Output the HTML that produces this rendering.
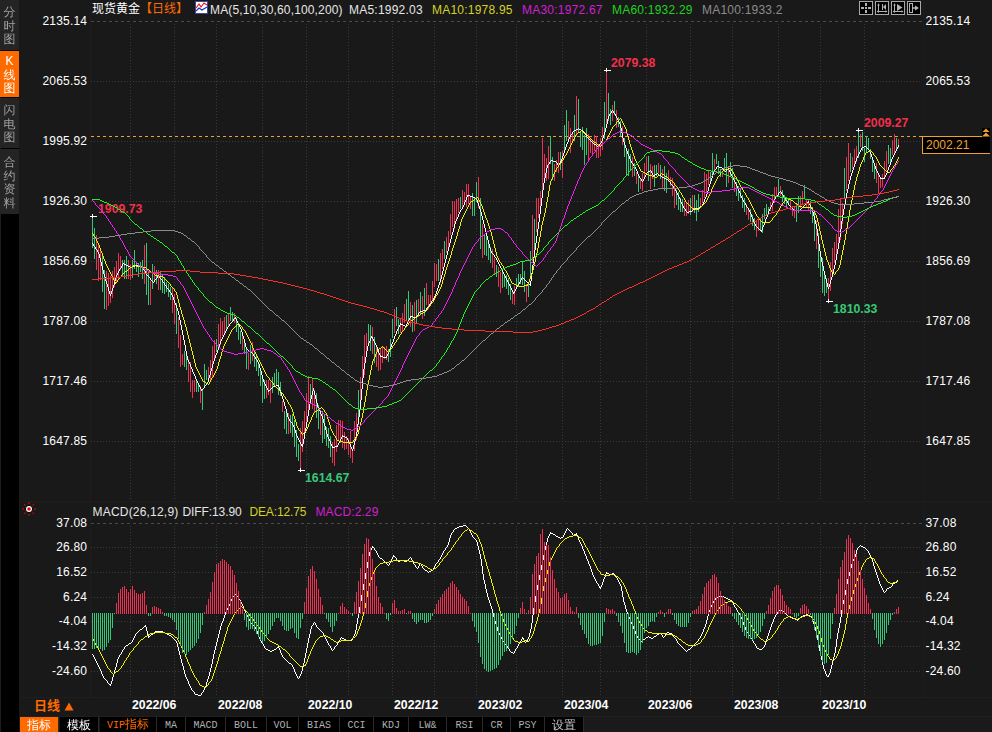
<!DOCTYPE html><html><head><meta charset="utf-8"><title>现货黄金 日线</title><style>
html,body{margin:0;padding:0;background:#191919;}
body{width:992px;height:732px;position:relative;overflow:hidden;font-family:"Liberation Sans","Noto Sans CJK SC",sans-serif;font-size:12px;color:#fff;}
.t{position:absolute;white-space:nowrap;line-height:14px;}
.yl{position:absolute;left:20px;width:67.2px;text-align:right;letter-spacing:0.2px;line-height:14px;height:14px;}
.yr{position:absolute;left:925.5px;letter-spacing:0.2px;line-height:14px;height:14px;}
.side{position:absolute;left:0;top:0;width:18px;height:732px;background:#000;border-left:1px solid #1c1c1c;box-sizing:content-box}
.tab{position:absolute;left:0;width:19px;background:#242424;color:#a0a0a0;font-family:"Liberation Sans","WenQuanYi Zen Hei","Noto Sans CJK SC",sans-serif;font-size:12px;text-align:center;}
.tab span{display:block;height:13.6px;line-height:13.6px;}
.tab.on{background:#ff6a00;color:#fff;}
.xl{position:absolute;top:698px;font-weight:bold;font-size:12.3px;line-height:14px;color:#fff;white-space:nowrap}
.bar{position:absolute;left:20px;top:716px;height:16px;width:972px;background:#1a1a1a;border-top:1px solid #1f1f1f;box-sizing:border-box}
.bt{position:absolute;top:717px;height:15px;line-height:18px;overflow:hidden;text-align:center;font-family:"Liberation Mono","Noto Sans CJK SC",monospace;font-size:10px;color:#b0b0b0;background:#000;box-sizing:border-box;border-right:1px solid #2a2a2a;}
.ib{position:absolute;top:1px;width:14px;height:14px;box-sizing:border-box;border:1px solid #a0a0a0;background:#000;}
</style></head><body>
<svg width="992" height="732" viewBox="0 0 992 732" shape-rendering="crispEdges" style="position:absolute;left:0;top:0"><line x1="91" y1="21.5" x2="922" y2="21.5" stroke="#4a4a4a" stroke-dasharray="3 3"/>
<line x1="91" y1="81.5" x2="922" y2="81.5" stroke="#3a3a3a" stroke-dasharray="1 2"/>
<line x1="91" y1="141.5" x2="922" y2="141.5" stroke="#3a3a3a" stroke-dasharray="1 2"/>
<line x1="91" y1="201.5" x2="922" y2="201.5" stroke="#3a3a3a" stroke-dasharray="1 2"/>
<line x1="91" y1="261.5" x2="922" y2="261.5" stroke="#3a3a3a" stroke-dasharray="1 2"/>
<line x1="91" y1="321.5" x2="922" y2="321.5" stroke="#3a3a3a" stroke-dasharray="1 2"/>
<line x1="91" y1="381.5" x2="922" y2="381.5" stroke="#3a3a3a" stroke-dasharray="1 2"/>
<line x1="91" y1="441.5" x2="922" y2="441.5" stroke="#3a3a3a" stroke-dasharray="1 2"/>
<line x1="130.5" y1="24" x2="130.5" y2="500" stroke="#3a3a3a" stroke-dasharray="1 2"/>
<line x1="130.5" y1="526" x2="130.5" y2="697" stroke="#3a3a3a" stroke-dasharray="1 2"/>
<line x1="174.5" y1="24" x2="174.5" y2="500" stroke="#3a3a3a" stroke-dasharray="1 2"/>
<line x1="174.5" y1="526" x2="174.5" y2="697" stroke="#3a3a3a" stroke-dasharray="1 2"/>
<line x1="216.5" y1="24" x2="216.5" y2="500" stroke="#3a3a3a" stroke-dasharray="1 2"/>
<line x1="216.5" y1="526" x2="216.5" y2="697" stroke="#3a3a3a" stroke-dasharray="1 2"/>
<line x1="262.5" y1="24" x2="262.5" y2="500" stroke="#3a3a3a" stroke-dasharray="1 2"/>
<line x1="262.5" y1="526" x2="262.5" y2="697" stroke="#3a3a3a" stroke-dasharray="1 2"/>
<line x1="306.5" y1="24" x2="306.5" y2="500" stroke="#3a3a3a" stroke-dasharray="1 2"/>
<line x1="306.5" y1="526" x2="306.5" y2="697" stroke="#3a3a3a" stroke-dasharray="1 2"/>
<line x1="348.5" y1="24" x2="348.5" y2="500" stroke="#3a3a3a" stroke-dasharray="1 2"/>
<line x1="348.5" y1="526" x2="348.5" y2="697" stroke="#3a3a3a" stroke-dasharray="1 2"/>
<line x1="392.5" y1="24" x2="392.5" y2="500" stroke="#3a3a3a" stroke-dasharray="1 2"/>
<line x1="392.5" y1="526" x2="392.5" y2="697" stroke="#3a3a3a" stroke-dasharray="1 2"/>
<line x1="434.5" y1="24" x2="434.5" y2="500" stroke="#3a3a3a" stroke-dasharray="1 2"/>
<line x1="434.5" y1="526" x2="434.5" y2="697" stroke="#3a3a3a" stroke-dasharray="1 2"/>
<line x1="476.5" y1="24" x2="476.5" y2="500" stroke="#3a3a3a" stroke-dasharray="1 2"/>
<line x1="476.5" y1="526" x2="476.5" y2="697" stroke="#3a3a3a" stroke-dasharray="1 2"/>
<line x1="516.5" y1="24" x2="516.5" y2="500" stroke="#3a3a3a" stroke-dasharray="1 2"/>
<line x1="516.5" y1="526" x2="516.5" y2="697" stroke="#3a3a3a" stroke-dasharray="1 2"/>
<line x1="562.5" y1="24" x2="562.5" y2="500" stroke="#3a3a3a" stroke-dasharray="1 2"/>
<line x1="562.5" y1="526" x2="562.5" y2="697" stroke="#3a3a3a" stroke-dasharray="1 2"/>
<line x1="600.5" y1="24" x2="600.5" y2="500" stroke="#3a3a3a" stroke-dasharray="1 2"/>
<line x1="600.5" y1="526" x2="600.5" y2="697" stroke="#3a3a3a" stroke-dasharray="1 2"/>
<line x1="646.5" y1="24" x2="646.5" y2="500" stroke="#3a3a3a" stroke-dasharray="1 2"/>
<line x1="646.5" y1="526" x2="646.5" y2="697" stroke="#3a3a3a" stroke-dasharray="1 2"/>
<line x1="690.5" y1="24" x2="690.5" y2="500" stroke="#3a3a3a" stroke-dasharray="1 2"/>
<line x1="690.5" y1="526" x2="690.5" y2="697" stroke="#3a3a3a" stroke-dasharray="1 2"/>
<line x1="732.5" y1="24" x2="732.5" y2="500" stroke="#3a3a3a" stroke-dasharray="1 2"/>
<line x1="732.5" y1="526" x2="732.5" y2="697" stroke="#3a3a3a" stroke-dasharray="1 2"/>
<line x1="778.5" y1="24" x2="778.5" y2="500" stroke="#3a3a3a" stroke-dasharray="1 2"/>
<line x1="778.5" y1="526" x2="778.5" y2="697" stroke="#3a3a3a" stroke-dasharray="1 2"/>
<line x1="820.5" y1="24" x2="820.5" y2="500" stroke="#3a3a3a" stroke-dasharray="1 2"/>
<line x1="820.5" y1="526" x2="820.5" y2="697" stroke="#3a3a3a" stroke-dasharray="1 2"/>
<line x1="864.5" y1="24" x2="864.5" y2="500" stroke="#3a3a3a" stroke-dasharray="1 2"/>
<line x1="864.5" y1="526" x2="864.5" y2="697" stroke="#3a3a3a" stroke-dasharray="1 2"/>
<line x1="91" y1="523.5" x2="922" y2="523.5" stroke="#4a4a4a" stroke-dasharray="3 3"/>
<line x1="91" y1="547.5" x2="922" y2="547.5" stroke="#3a3a3a" stroke-dasharray="1 2"/>
<line x1="91" y1="572.5" x2="922" y2="572.5" stroke="#3a3a3a" stroke-dasharray="1 2"/>
<line x1="91" y1="597.5" x2="922" y2="597.5" stroke="#3a3a3a" stroke-dasharray="1 2"/>
<line x1="91" y1="621.5" x2="922" y2="621.5" stroke="#3a3a3a" stroke-dasharray="1 2"/>
<line x1="91" y1="646.5" x2="922" y2="646.5" stroke="#3a3a3a" stroke-dasharray="1 2"/>
<line x1="91" y1="671.5" x2="922" y2="671.5" stroke="#3a3a3a" stroke-dasharray="1 2"/>
<rect x="20" y="501" width="972" height="1" fill="#1e1e1e"/>
<rect x="20" y="697" width="972" height="1" fill="#1e1e1e"/>
<rect x="90" y="0" width="1" height="698" fill="#1d1d1d"/>
<rect x="923" y="0" width="1" height="698" fill="#1c1c1c"/>
<line x1="91" y1="136.5" x2="922" y2="136.5" stroke="#f0a030" stroke-dasharray="3 3"/>
<text x="98" y="213.26" fill="#f0304c" font-family="Liberation Sans, sans-serif" font-weight="bold" font-size="12.3" text-rendering="auto">1909.73</text>
<text x="611" y="67.26" fill="#f0304c" font-family="Liberation Sans, sans-serif" font-weight="bold" font-size="12.3" text-rendering="auto">2079.38</text>
<text x="864" y="127.26" fill="#f0304c" font-family="Liberation Sans, sans-serif" font-weight="bold" font-size="12.3" text-rendering="auto">2009.27</text>
<text x="305" y="482.26" fill="#38c878" font-family="Liberation Sans, sans-serif" font-weight="bold" font-size="12.3" text-rendering="auto">1614.67</text>
<text x="833" y="313.26" fill="#38c878" font-family="Liberation Sans, sans-serif" font-weight="bold" font-size="12.3" text-rendering="auto">1810.33</text>
<path d="M92 216v32M94 228v31M102 256v36M104 270v39M122 260v16M124 260v19M126 256v23M132 260v18M134 250v19M136 263v9M138 263v14M140 262v10M142 260v19M146 243v52M148 271v34M152 264v25M156 270v14M160 271v19M162 275v18M164 277v17M166 282v10M168 284v13M170 287v13M176 303v31M184 351v16M186 356v14M196 379v13M198 385v7M202 389v21M204 364v24M206 370v10M216 339v13M226 315v14M230 307v14M232 312v9M236 318v14M238 325v15M240 331v13M244 342v12M246 348v21M250 345v19M254 352v15M256 354v17M258 363v13M260 370v16M262 377v26M264 380v19M272 377v16M274 373v13M276 369v16M278 372v23M280 382v14M284 411v18M286 413v21M290 415v18M292 414v23M294 420v27M296 430v27M298 444v17M310 384v20M316 393v25M318 405v24M322 411v32M324 415v24M326 427v19M328 428v20M330 436v21M358 390v35M368 324v20M370 325v26M374 337v26M388 349v13M390 339v18M392 319v19M396 307v19M398 319v15M406 299v22M408 291v29M412 305v27M416 300v24M420 292v23M424 288v28M438 259v22M444 241v18M460 197v12M472 193v23M474 197v19M476 182v20M480 198v51M484 235v20M486 232v24M488 243v17M490 247v16M496 265v12M502 271v17M504 274v13M506 275v14M508 278v17M510 284v16M516 278v10M518 274v13M520 274v10M522 262v23M524 271v21M528 282v15M530 251v28M534 219v31M550 136v28M552 157v23M560 152v18M564 125v25M566 110v31M574 115v26M578 99v34M580 132v15M582 127v23M584 135v30M586 128v27M604 102v37M608 93v28M610 109v16M614 101v14M618 117v10M620 121v15M624 138v19M626 150v25M628 149v27M630 154v16M634 163v13M638 174v18M648 156v25M654 165v22M656 165v11M660 165v14M664 166v25M666 173v20M676 190v15M678 192v18M680 198v14M682 199v13M690 198v17M694 195v18M696 200v21M698 194v18M710 172v9M712 153v23M716 154v10M718 161v13M720 169v8M724 158v14M726 153v34M730 162v15M732 168v20M736 182v14M738 186v15M740 188v10M742 195v13M744 198v14M750 209v13M752 215v11M754 218v12M760 218v12M762 214v19M764 208v11M766 204v11M768 207v8M778 179v17M782 190v12M784 195v9M786 197v11M788 198v7M796 203v19M798 196v17M804 185v14M810 201v13M812 207v16M814 213v28M818 233v35M820 254v23M822 258v35M824 271v25M826 278v15M844 168v30M850 153v19M858 131v27M862 132v19M864 148v14M866 136v17M868 138v11M870 149v10M872 158v14M874 163v16M888 145v19M890 148v16M896 138v11" stroke="#32c878" transform="translate(.5 0)"/>
<path d="M96 235v35M98 243v38M100 250v30M106 271v39M108 273v33M110 276v27M112 271v27M114 267v20M116 261v21M118 253v26M120 256v14M128 260v19M130 265v15M144 245v39M150 281v24M154 266v16M158 270v20M172 288v25M174 294v30M178 317v31M180 335v32M182 354v11M188 359v23M190 362v30M192 380v18M194 380v12M200 386v17M208 367v14M210 360v22M212 346v32M214 340v18M218 324v26M220 318v27M222 321v15M224 317v17M228 313v14M234 313v10M242 332v18M248 353v17M252 342v19M266 380v18M268 380v15M270 382v21M282 401v11M288 413v21M300 428v42M302 421v31M304 411v27M306 393v34M308 376v37M312 379v30M314 390v23M320 412v23M332 442v21M334 439v27M336 425v27M338 420v21M340 420v23M342 421v27M344 432v18M346 436v13M348 439v16M350 431v27M352 450v13M354 421v30M356 413v27M360 377v32M362 356v29M364 335v40M366 333v23M372 327v27M376 345v22M378 349v22M380 349v21M382 347v16M384 347v12M386 346v14M394 309v24M400 319v14M402 313v19M404 304v19M410 302v25M414 302v29M418 299v18M422 296v23M426 283v22M428 295v14M430 295v10M432 281v19M434 263v24M436 264v17M440 253v30M442 249v20M446 237v16M448 231v16M450 214v21M452 201v26M454 201v28M456 199v22M458 198v15M462 190v18M464 192v12M466 184v23M468 184v20M470 196v13M478 177v31M482 224v34M492 249v19M494 258v16M498 267v20M500 272v21M512 292v12M514 286v19M526 284v18M532 215v46M536 198v34M538 198v20M540 191v20M542 138v54M544 154v28M546 158v23M548 146v33M554 164v17M556 160v12M558 152v21M562 151v27M568 121v21M570 128v25M572 134v8M576 96v40M588 134v28M590 138v15M592 140v14M594 135v16M596 136v22M598 144v14M600 138v18M602 127v23M606 71v57M612 105v16M616 110v18M622 126v19M632 157v20M636 172v12M640 179v10M642 173v18M644 163v14M646 157v14M650 164v25M652 166v13M658 163v10M662 169v19M668 170v12M670 177v9M672 178v18M674 185v23M684 201v15M686 202v14M688 200v14M692 195v17M700 198v10M702 190v13M704 172v26M706 174v18M708 170v15M714 159v13M722 171v6M728 167v16M734 176v16M746 204v11M748 209v11M756 221v16M758 217v14M770 202v9M772 194v17M774 187v16M776 187v10M780 186v10M790 200v10M792 206v10M794 206v12M800 196v12M802 191v13M806 199v9M808 200v10M816 221v28M828 278v23M830 262v29M832 248v25M834 242v21M836 234v25M838 209v36M840 198v42M842 203v21M846 157v34M848 143v38M852 157v12M854 149v15M856 146v16M860 134v13M876 163v20M878 175v19M880 178v10M882 174v13M884 161v17M886 151v19M892 140v15M894 134v21M898 139v9" stroke="#ee3152" transform="translate(.5 0)"/>
<path d="M124 264h2M126 265h2M128 266h2M130 267h2M132 266h3M135 265h3M138 266h3M141 267h2M201 389h2M234 318h2M249 351h2M268 390h2M273 386h3M276 385h3M301 444h2M301 445h2M332 447h3M335 446h3M342 436h3M345 437h2M371 337h2M380 356h3M383 357h4M400 324h3M403 325h2M410 316h3M413 317h3M420 311h3M423 310h3M467 195h3M470 196h3M473 197h2M475 198h2M513 292h2M529 284h2M551 160h2M553 161h3M574 130h2M576 129h2M579 129h2M581 130h2M594 144h2M648 171h2M653 175h2M655 174h2M659 175h2M662 177h2M664 178h2M666 179h2M687 212h2M689 211h3M693 209h2M695 208h4M700 206h2M717 166h2M719 167h3M727 169h2M760 230h2M794 210h6M807 202h2M862 147h2M864 146h2M880 178h5" stroke="#ffffff" transform="translate(0 .5)"/><path d="M92 243v1M93 244v2M94 246v1M95 247v2M96 249v1M97 250v2M98 252v2M99 254v4M100 258v4M101 262v4M102 266v4M103 270v4M104 274v3M105 277v4M106 281v3M107 284v3M108 287v4M109 291v3M110 294v2M111 291v3M112 288v3M113 285v3M114 281v4M115 278v3M116 275v3M117 273v2M118 271v2M119 269v2M120 268v1M121 266v2M122 264v2M123 263v1M143 268v2M144 270v1M145 271v2M146 273v2M147 275v1M148 276v1M149 277v1M150 278v2M151 280v1M152 281v1M153 282v1M154 280v2M155 279v1M156 278v1M157 276v2M158 275v1M159 276v2M160 278v1M161 279v1M162 280v2M163 282v1M164 283v2M165 285v1M166 286v2M167 288v1M168 289v1M169 290v2M170 292v1M171 293v2M172 295v2M173 297v3M174 300v3M175 303v2M176 305v3M177 308v3M178 311v4M179 315v5M180 320v5M181 325v5M182 330v5M183 335v5M184 340v5M185 345v6M186 351v5M187 356v4M188 360v2M189 362v2M190 364v3M191 367v2M192 369v3M193 372v2M194 374v2M195 376v3M196 379v2M197 381v2M198 383v2M199 385v2M200 387v2M201 390v1M203 388v1M204 386v2M205 385v1M206 384v1M207 382v2M208 378v4M209 375v3M210 371v4M211 368v3M212 364v4M213 361v3M214 358v3M215 355v3M216 353v2M217 350v3M218 347v3M219 344v3M220 341v3M221 339v2M222 337v2M223 335v2M224 333v2M225 331v2M226 329v2M227 327v2M228 326v1M229 324v2M230 323v1M231 322v1M232 321v1M233 319v2M235 317v1M236 319v2M237 321v2M238 323v2M239 325v2M240 327v2M241 329v3M242 332v4M243 336v3M244 339v4M245 343v4M246 347v2M247 349v1M248 350v1M251 352v1M252 353v1M253 354v2M254 356v1M255 357v2M256 359v1M257 360v2M258 362v2M259 364v4M260 368v3M261 371v4M262 375v4M263 379v3M264 382v2M265 384v2M266 386v2M267 388v2M268 391v1M270 389v1M271 388v1M272 387v1M278 386v1M279 387v3M280 390v3M281 393v3M282 396v3M283 399v3M284 402v4M285 406v3M286 409v4M287 413v4M288 417v2M289 419v2M290 421v1M291 422v1M292 423v2M293 425v2M294 427v3M295 430v3M296 433v3M297 436v2M298 438v2M299 440v2M300 442v2M302 446v1M303 439v5M304 433v6M305 428v5M306 422v6M307 416v6M308 410v6M309 404v6M310 399v5M311 395v4M312 391v4M313 388v3M314 391v4M315 395v4M316 399v4M317 403v4M318 407v2M319 409v2M320 411v3M321 414v2M322 416v3M323 419v4M324 423v3M325 426v4M326 430v4M327 434v3M328 437v2M329 439v2M330 441v3M331 444v2M332 446v1M337 445v1M338 443v2M339 441v2M340 439v2M341 437v2M342 435v1M347 438v2M348 440v2M349 442v2M350 444v3M351 447v2M352 449v2M353 445v4M354 441v4M355 437v4M356 432v5M357 424v8M358 417v7M359 409v8M360 400v9M361 389v11M362 378v11M363 369v9M364 363v6M365 357v6M366 351v6M367 346v5M368 343v3M369 341v2M370 338v3M371 336v1M372 338v1M373 339v2M374 341v2M375 343v2M376 345v2M377 347v3M378 350v3M379 353v2M380 355v1M386 356v1M387 354v2M388 352v2M389 349v3M390 347v2M391 344v3M392 342v2M393 339v3M394 336v3M395 334v2M396 331v3M397 329v2M398 327v2M399 325v2M400 323v1M405 326v1M406 324v2M407 322v2M408 320v2M409 318v2M410 317v1M416 316v1M417 315v1M418 313v2M419 312v1M426 308v2M427 307v1M428 306v1M429 304v2M430 303v1M431 301v2M432 300v1M433 298v2M434 296v2M435 294v2M436 291v3M437 288v3M438 285v3M439 282v3M440 279v3M441 275v4M442 271v4M443 267v4M444 263v4M445 259v4M446 255v4M447 251v4M448 247v4M449 243v4M450 239v4M451 235v4M452 232v3M453 228v4M454 224v4M455 221v3M456 219v2M457 217v2M458 214v3M459 212v2M460 210v2M461 209v1M462 207v2M463 205v2M464 202v3M465 200v2M466 197v3M467 196v1M476 199v1M477 200v3M478 203v3M479 206v3M480 209v3M481 212v4M482 216v4M483 220v4M484 224v4M485 228v4M486 232v4M487 236v4M488 240v4M489 244v4M490 248v3M491 251v2M492 253v1M493 254v1M494 255v2M495 257v1M496 258v2M497 260v2M498 262v2M499 264v2M500 266v2M501 268v2M502 270v2M503 272v2M504 274v2M505 276v2M506 278v2M507 280v2M508 282v2M509 284v2M510 286v2M511 288v2M512 290v2M513 293v1M514 291v1M515 289v2M516 287v2M517 286v1M518 284v2M519 282v2M520 280v2M521 278v2M522 277v1M523 278v1M524 279v1M525 280v1M526 281v1M527 282v1M528 283v1M530 281v3M530 285v1M531 273v8M532 265v8M533 257v8M534 250v7M535 243v7M536 236v7M537 229v7M538 222v7M539 214v8M540 206v8M541 198v8M542 190v8M543 183v7M544 178v5M545 173v5M546 168v5M547 165v3M548 164v1M549 162v2M550 161v1M556 162v1M557 163v2M558 165v1M559 163v2M560 161v2M561 159v2M562 156v3M563 153v3M564 150v3M565 147v3M566 144v3M567 142v2M568 139v3M569 137v2M570 135v2M571 134v1M572 132v2M573 131v1M578 128v1M583 131v1M584 132v2M585 134v1M586 135v2M587 137v1M588 138v1M589 139v1M590 140v1M591 141v1M592 142v1M593 143v1M596 145v1M597 146v1M598 145v1M599 144v1M600 143v1M601 141v2M602 138v3M603 135v3M604 132v3M605 128v4M606 124v4M607 119v5M608 116v3M609 114v2M610 113v1M611 111v2M612 110v1M613 111v2M614 113v1M615 114v2M616 116v2M617 118v2M618 120v2M619 122v2M620 124v4M621 128v5M622 133v5M623 138v4M624 142v3M625 145v3M626 148v3M627 151v3M628 154v2M629 156v3M630 159v2M631 161v2M632 163v1M633 164v2M634 166v1M635 167v2M636 169v2M637 171v3M638 174v2M639 176v2M640 178v1M641 179v2M642 181v1M643 179v2M644 177v2M645 175v2M646 173v2M647 172v1M650 170v1M651 171v2M652 173v2M653 176v1M657 173v1M658 174v1M661 176v1M668 180v1M669 181v1M670 182v2M671 184v1M672 185v1M673 186v2M674 188v1M675 189v2M676 191v2M677 193v2M678 195v2M679 197v2M680 199v3M681 202v2M682 204v2M683 206v2M684 208v1M685 209v2M686 211v1M692 210v1M699 207v1M702 204v2M703 202v2M704 199v3M705 197v2M706 194v3M707 191v3M708 187v4M709 184v3M710 181v3M711 178v3M712 174v4M713 172v2M714 170v2M715 169v1M716 167v2M722 168v1M723 169v1M724 170v1M725 171v1M726 170v1M728 168v1M729 170v2M730 172v2M731 174v2M732 176v2M733 178v2M734 180v2M735 182v2M736 184v2M737 186v3M738 189v2M739 191v2M740 193v3M741 196v2M742 198v2M743 200v2M744 202v1M745 203v2M746 205v2M747 207v1M748 208v2M749 210v2M750 212v2M751 214v3M752 217v2M753 219v3M754 222v2M755 224v2M756 226v1M757 227v1M758 228v1M759 229v1M761 231v1M762 227v3M763 225v2M764 222v3M765 219v3M766 217v2M767 214v3M768 211v3M769 209v2M770 207v2M771 205v2M772 203v2M773 201v2M774 199v2M775 197v2M776 196v1M777 195v1M778 193v2M779 192v1M780 191v1M781 192v2M782 194v1M783 195v2M784 197v1M785 198v2M786 200v1M787 201v2M788 203v2M789 205v1M790 206v1M791 207v1M792 208v1M793 209v1M800 209v1M801 208v1M802 207v1M803 206v1M804 205v1M805 204v1M806 203v1M808 201v1M809 203v2M810 205v2M811 207v2M812 209v3M813 212v4M814 216v4M815 220v4M816 224v5M817 229v7M818 236v8M819 244v7M820 251v6M821 257v5M822 262v4M823 266v5M824 271v4M825 275v4M826 279v4M827 283v4M828 287v2M829 284v3M830 280v4M831 277v3M832 273v4M833 269v4M834 265v4M835 260v5M836 254v6M837 249v5M838 243v6M839 237v6M840 229v8M841 221v8M842 215v6M843 209v6M844 204v5M845 198v6M846 193v5M847 189v4M848 184v5M849 180v4M850 176v4M851 173v3M852 170v3M853 167v3M854 164v3M855 161v3M856 158v3M857 156v2M858 154v2M859 152v2M860 150v2M861 148v2M866 147v1M867 148v1M868 149v1M869 150v2M870 152v2M871 154v3M872 157v3M873 160v3M874 163v3M875 166v3M876 169v2M877 171v2M878 173v2M879 175v2M880 177v1M884 177v1M885 175v2M886 173v2M887 170v3M888 167v3M889 165v2M890 162v3M891 159v3M892 157v2M893 155v2M894 153v2M895 151v2M896 149v2M897 147v2M898 145v2" stroke="#ffffff" transform="translate(.5 0)"/>
<path d="M115 282h2M125 271h2M130 267h2M133 265h3M136 266h6M142 267h4M147 269h2M152 273h2M155 275h4M159 276h4M203 381h2M206 383h2M315 411h2M319 408h2M337 440h2M339 441h4M343 442h10M379 348h2M411 320h2M415 317h2M418 315h2M421 313h2M423 312h2M471 201h2M475 198h2M512 283h2M514 284h2M516 285h3M519 286h5M524 285h4M578 132h2M584 133h2M594 142h2M598 145h2M641 171h2M643 172h2M645 173h2M647 174h2M649 175h3M652 176h3M655 177h2M658 175h2M662 174h2M665 176h2M670 180h2M692 208h3M695 209h4M723 170h2M725 169h4M729 168h2M762 222h8M786 198h2M788 199h3M791 200h2M795 203h2M799 206h3M802 207h10M866 152h2M868 151h2M886 171h2M888 172h2" stroke="#f0f000" transform="translate(0 .5)"/><path d="M92 233v1M93 234v2M94 236v1M95 237v2M96 239v2M97 241v2M98 243v2M99 245v3M100 248v3M101 251v2M102 253v3M103 256v3M104 259v2M105 261v3M106 264v2M107 266v2M108 268v2M109 270v2M110 272v2M111 274v2M112 276v2M113 278v2M114 280v2M115 283v1M117 280v2M118 279v1M119 278v1M120 277v1M121 275v2M122 274v1M123 273v1M124 272v1M127 270v1M128 269v1M129 268v1M132 266v1M146 268v1M149 270v1M150 271v1M151 272v1M154 274v1M163 277v1M164 278v1M165 279v1M166 280v1M167 281v1M168 282v1M169 283v1M170 284v2M171 286v1M172 287v1M173 288v1M174 289v2M175 291v1M176 292v3M177 295v4M178 299v4M179 303v4M180 307v3M181 310v4M182 314v3M183 317v3M184 320v4M185 324v3M186 327v4M187 331v4M188 335v4M189 339v4M190 343v4M191 347v4M192 351v4M193 355v4M194 359v4M195 363v4M196 367v2M197 369v2M198 371v2M199 373v2M200 375v2M201 377v2M202 379v2M205 382v1M208 384v1M209 382v2M210 380v2M211 378v2M212 377v1M213 375v2M214 373v2M215 371v2M216 369v2M217 366v3M218 362v4M219 359v3M220 356v3M221 352v4M222 349v3M223 346v3M224 344v2M225 342v2M226 340v2M227 338v2M228 336v2M229 334v2M230 332v2M231 330v2M232 329v1M233 328v1M234 327v1M235 326v1M236 325v1M237 324v1M238 323v1M239 324v1M240 325v1M241 326v1M242 327v2M243 329v1M244 330v1M245 331v2M246 333v2M247 335v2M248 337v2M249 339v2M250 341v2M251 343v2M252 345v3M253 348v2M254 350v2M255 352v2M256 354v2M257 356v2M258 358v2M259 360v2M260 362v2M261 364v2M262 366v2M263 368v2M264 370v2M265 372v2M266 374v2M267 376v1M268 377v1M269 378v2M270 380v1M271 381v1M272 382v1M273 383v2M274 385v1M275 386v1M276 387v1M277 388v1M278 389v1M279 390v1M280 391v1M281 392v1M282 393v1M283 394v2M284 396v1M285 397v2M286 399v1M287 400v2M288 402v2M289 404v1M290 405v2M291 407v2M292 409v3M293 412v4M294 416v3M295 419v3M296 422v4M297 426v2M298 428v2M299 430v1M300 431v1M301 432v2M302 434v1M303 433v1M304 432v1M305 431v1M306 429v2M307 427v2M308 424v3M309 422v2M310 420v2M311 417v3M312 415v2M313 413v2M314 412v1M317 410v1M318 409v1M321 407v1M322 408v1M323 409v1M324 410v2M325 412v1M326 413v2M327 415v4M328 419v3M329 422v3M330 425v4M331 429v2M332 431v2M333 433v2M334 435v1M335 436v2M336 438v2M353 440v2M354 439v1M355 438v1M356 436v2M357 434v2M358 430v4M359 426v4M360 422v4M361 418v4M362 413v5M363 407v6M364 402v5M365 396v6M366 390v6M367 385v5M368 380v5M369 375v5M370 370v5M371 365v5M372 361v4M373 359v2M374 357v2M375 354v3M376 352v2M377 350v2M378 349v1M381 347v1M382 346v1M383 347v1M384 348v1M385 349v1M386 350v1M387 351v1M388 352v1M389 350v2M390 349v1M391 348v1M392 346v2M393 345v1M394 343v2M395 342v1M396 340v2M397 339v1M398 337v2M399 335v2M400 334v1M401 332v2M402 331v1M403 330v1M404 328v2M405 327v1M406 326v1M407 325v1M408 323v2M409 322v1M410 321v1M413 319v1M414 318v1M417 316v1M420 314v1M425 311v1M426 310v1M427 308v2M428 307v1M429 306v1M430 304v2M431 303v1M432 302v1M433 300v2M434 298v2M435 296v2M436 295v1M437 293v2M438 291v2M439 289v2M440 287v2M441 284v3M442 280v4M443 277v3M444 274v3M445 270v4M446 267v3M447 264v3M448 261v3M449 258v3M450 255v3M451 251v4M452 248v3M453 245v3M454 242v3M455 239v3M456 236v3M457 232v4M458 229v3M459 226v3M460 222v4M461 219v3M462 217v2M463 215v2M464 213v2M465 211v2M466 209v2M467 207v2M468 205v2M469 203v2M470 202v1M473 200v1M474 199v1M477 197v1M478 198v2M479 200v2M480 202v2M481 204v2M482 206v3M483 209v3M484 212v3M485 215v3M486 218v2M487 220v3M488 223v3M489 226v3M490 229v3M491 232v4M492 236v4M493 240v4M494 244v4M495 248v4M496 252v4M497 256v2M498 258v2M499 260v2M500 262v1M501 263v2M502 265v1M503 266v2M504 268v2M505 270v1M506 271v2M507 273v2M508 275v2M509 277v2M510 279v2M511 281v2M527 284v1M528 282v2M529 279v3M530 276v3M531 274v2M532 270v4M533 266v4M534 262v4M535 257v5M536 253v4M537 248v5M538 242v6M539 237v5M540 231v6M541 225v6M542 221v4M543 217v4M544 213v4M545 208v5M546 202v6M547 197v5M548 191v6M549 185v6M550 181v4M551 179v2M552 177v2M553 174v3M554 172v2M555 170v2M556 168v2M557 167v1M558 165v2M559 164v1M560 163v1M561 161v2M562 160v1M563 158v2M564 156v2M565 155v1M566 153v2M567 151v2M568 149v2M569 147v2M570 145v2M571 143v2M572 141v2M573 139v2M574 137v2M575 135v2M576 134v1M577 133v1M580 131v1M581 130v1M582 131v1M583 132v1M586 134v1M587 135v1M588 136v1M589 137v1M590 138v1M591 139v1M592 140v1M593 141v1M596 143v1M597 144v1M600 146v1M601 145v1M602 144v1M603 143v1M604 142v1M605 141v1M606 139v2M607 137v2M608 135v2M609 133v2M610 131v2M611 129v2M612 127v2M613 126v1M614 125v1M615 124v1M616 122v2M617 121v1M618 120v1M619 119v1M620 118v1M621 119v2M622 121v2M623 123v2M624 125v2M625 127v2M626 129v4M627 133v3M628 136v4M629 140v4M630 144v3M631 147v3M632 150v3M633 153v3M634 156v3M635 159v2M636 161v2M637 163v2M638 165v2M639 167v2M640 169v2M657 176v1M660 174v1M661 173v1M664 175v1M667 177v1M668 178v1M669 179v1M672 181v1M673 182v1M674 183v2M675 185v1M676 186v1M677 187v2M678 189v1M679 190v2M680 192v1M681 193v2M682 195v2M683 197v1M684 198v2M685 200v2M686 202v1M687 203v1M688 204v1M689 205v1M690 206v1M691 207v1M699 208v1M700 207v1M701 206v1M702 205v1M703 204v1M704 203v1M705 202v1M706 200v2M707 198v2M708 196v2M709 194v2M710 192v2M711 189v3M712 187v2M713 185v2M714 183v2M715 181v2M716 179v2M717 177v2M718 176v1M719 175v1M720 173v2M721 172v1M722 171v1M731 169v2M732 171v1M733 172v2M734 174v2M735 176v1M736 177v2M737 179v2M738 181v2M739 183v2M740 185v2M741 187v1M742 188v2M743 190v2M744 192v1M745 193v2M746 195v2M747 197v1M748 198v2M749 200v2M750 202v2M751 204v2M752 206v2M753 208v2M754 210v2M755 212v2M756 214v2M757 216v1M758 217v1M759 218v2M760 220v1M761 221v1M770 221v1M771 220v1M772 218v2M773 217v1M774 216v1M775 215v1M776 213v2M777 211v2M778 210v1M779 208v2M780 206v2M781 205v1M782 203v2M783 202v1M784 201v1M785 199v2M793 201v1M794 202v1M797 204v1M798 205v1M812 208v2M813 210v1M814 211v2M815 213v2M816 215v3M817 218v4M818 222v4M819 226v5M820 231v4M821 235v5M822 240v4M823 244v4M824 248v4M825 252v4M826 256v4M827 260v2M828 262v3M829 265v3M830 268v2M831 270v2M832 272v1M833 273v1M834 274v1M835 272v2M836 271v1M837 270v1M838 268v2M839 265v3M840 260v5M841 255v5M842 250v5M843 245v5M844 240v5M845 234v6M846 228v6M847 222v6M848 216v6M849 210v6M850 205v5M851 200v5M852 195v5M853 190v5M854 185v5M855 181v4M856 177v4M857 174v3M858 171v3M859 167v4M860 164v3M861 162v2M862 160v2M863 157v3M864 155v2M865 153v2M870 150v1M871 151v1M872 152v1M873 153v2M874 155v1M875 156v1M876 157v2M877 159v2M878 161v2M879 163v2M880 165v1M881 166v1M882 167v1M883 168v1M884 169v1M885 170v1M890 170v2M891 169v1M892 168v1M893 166v2M894 165v1M895 163v2M896 161v2M897 159v2M898 157v2" stroke="#f0f000" transform="translate(.5 0)"/>
<path d="M141 267h2M143 268h2M146 270h2M148 271h2M150 272h2M152 273h7M159 274h9M168 275h5M173 276h3M222 350h2M224 351h3M227 352h4M231 353h3M234 354h4M238 353h5M243 352h5M248 351h4M252 350h4M256 349h4M260 348h4M264 349h3M267 350h4M271 351h2M274 353h2M278 356h2M306 401h2M308 402h2M310 403h2M312 404h2M314 405h2M324 414h2M328 417h2M332 420h2M336 423h2M338 424h2M341 426h2M343 427h2M345 428h2M347 429h4M351 430h2M353 429h2M356 427h2M358 426h2M423 329h2M425 328h2M427 327h2M429 326h2M482 235h2M487 231h2M490 229h5M495 228h6M501 229h2M505 232h2M531 262h2M601 144h2M608 138h2M613 134h2M615 133h2M617 132h2M619 131h4M623 132h3M626 133h2M628 134h2M630 135h2M636 140h2M641 144h2M643 145h2M645 146h2M647 147h2M649 148h2M651 149h2M653 150h2M655 151h2M657 152h2M659 153h2M691 187h2M693 188h2M695 189h2M697 190h2M699 191h5M704 192h8M712 191h10M722 190h8M730 189h5M735 188h7M742 187h7M749 188h2M751 189h2M753 190h2M755 191h2M757 192h2M759 193h2M761 194h2M763 195h2M765 196h2M767 197h2M769 198h2M771 199h2M773 200h2M775 201h2M777 202h2M780 204h2M782 205h2M784 206h2M786 207h2M788 208h3M791 209h2M793 210h22M815 211h2M819 214h2M835 230h2M837 231h3M840 232h2M842 231h2M845 229h2M847 228h2" stroke="#f020f0" transform="translate(0 .5)"/><path d="M92 200v1M93 201v1M94 202v1M95 203v2M96 205v1M97 206v1M98 207v1M99 208v1M100 209v1M101 210v1M102 211v2M103 213v1M104 214v1M105 215v1M106 216v2M107 218v1M108 219v2M109 221v1M110 222v2M111 224v1M112 225v2M113 227v1M114 228v2M115 230v1M116 231v2M117 233v1M118 234v2M119 236v2M120 238v2M121 240v1M122 241v2M123 243v2M124 245v2M125 247v2M126 249v1M127 250v2M128 252v2M129 254v2M130 256v1M131 257v1M132 258v1M133 259v1M134 260v1M135 261v1M136 262v1M137 263v1M138 264v1M139 265v1M140 266v1M145 269v1M176 277v1M177 278v2M178 280v1M179 281v1M180 282v2M181 284v1M182 285v1M183 286v2M184 288v2M185 290v2M186 292v2M187 294v2M188 296v2M189 298v2M190 300v2M191 302v2M192 304v2M193 306v2M194 308v2M195 310v2M196 312v2M197 314v2M198 316v2M199 318v2M200 320v2M201 322v2M202 324v2M203 326v2M204 328v1M205 329v2M206 331v1M207 332v2M208 334v1M209 335v2M210 337v1M211 338v2M212 340v1M213 341v1M214 342v1M215 343v1M216 344v1M217 345v1M218 346v1M219 347v1M220 348v1M221 349v1M273 352v1M276 354v1M277 355v1M280 357v1M281 358v2M282 360v1M283 361v2M284 363v1M285 364v2M286 366v1M287 367v2M288 369v1M289 370v2M290 372v2M291 374v2M292 376v2M293 378v2M294 380v2M295 382v2M296 384v2M297 386v2M298 388v2M299 390v2M300 392v1M301 393v2M302 395v1M303 396v2M304 398v2M305 400v1M316 406v1M317 407v1M318 408v1M319 409v1M320 410v1M321 411v1M322 412v1M323 413v1M326 415v1M327 416v1M330 418v1M331 419v1M334 421v1M335 422v1M340 425v1M355 428v1M360 425v1M361 424v1M362 423v1M363 422v1M364 420v2M365 419v1M366 418v1M367 417v1M368 416v1M369 415v1M370 414v1M371 413v1M372 412v1M373 411v1M374 410v1M375 409v1M376 408v1M377 407v1M378 406v1M379 405v1M380 404v1M381 403v1M382 401v2M383 400v1M384 399v1M385 398v1M386 397v1M387 396v1M388 394v2M389 392v2M390 390v2M391 388v2M392 386v2M393 384v2M394 382v2M395 380v2M396 378v2M397 376v2M398 374v2M399 372v2M400 370v2M401 368v2M402 365v3M403 363v2M404 361v2M405 359v2M406 357v2M407 355v2M408 353v2M409 351v2M410 349v2M411 347v2M412 345v2M413 343v2M414 341v2M415 339v2M416 337v2M417 336v1M418 335v1M419 333v2M420 332v1M421 331v1M422 330v1M431 325v1M432 323v2M433 322v1M434 321v1M435 319v2M436 318v1M437 317v1M438 315v2M439 314v1M440 313v1M441 311v2M442 310v1M443 308v2M444 306v2M445 304v2M446 302v2M447 300v2M448 298v2M449 296v2M450 294v2M451 292v2M452 289v3M453 287v2M454 285v2M455 282v3M456 280v2M457 278v2M458 276v2M459 273v3M460 271v2M461 269v2M462 267v2M463 265v2M464 263v2M465 261v2M466 259v2M467 257v2M468 255v2M469 253v2M470 251v2M471 249v2M472 247v2M473 246v1M474 244v2M475 243v1M476 242v1M477 241v1M478 239v2M479 238v1M480 237v1M481 236v1M484 234v1M485 233v1M486 232v1M489 230v1M503 230v1M504 231v1M507 233v1M508 234v2M509 236v1M510 237v1M511 238v2M512 240v1M513 241v2M514 243v1M515 244v1M516 245v2M517 247v1M518 248v1M519 249v1M520 250v1M521 251v1M522 252v2M523 254v1M524 255v1M525 256v1M526 257v1M527 258v1M528 259v1M529 260v1M530 261v1M533 263v1M534 264v1M535 265v1M536 266v1M537 265v1M538 264v1M539 263v1M540 262v1M541 261v1M542 260v1M543 258v2M544 257v1M545 255v2M546 254v1M547 252v2M548 251v1M549 250v1M550 248v2M551 247v1M552 246v1M553 244v2M554 243v1M555 241v2M556 238v3M557 235v3M558 232v3M559 229v3M560 226v3M561 223v3M562 220v3M563 218v2M564 215v3M565 212v3M566 209v3M567 206v3M568 204v2M569 201v3M570 199v2M571 196v3M572 194v2M573 191v3M574 189v2M575 186v3M576 184v2M577 181v3M578 179v2M579 177v2M580 174v3M581 172v2M582 170v2M583 168v2M584 166v2M585 165v1M586 163v2M587 162v1M588 160v2M589 158v2M590 157v1M591 156v1M592 154v2M593 153v1M594 152v1M595 150v2M596 149v1M597 148v1M598 147v1M599 146v1M600 145v1M603 143v1M604 142v1M605 141v1M606 140v1M607 139v1M610 137v1M611 136v1M612 135v1M632 136v1M633 137v1M634 138v1M635 139v1M638 141v1M639 142v1M640 143v1M661 154v1M662 155v1M663 156v2M664 158v1M665 159v1M666 160v1M667 161v1M668 162v2M669 164v1M670 165v1M671 166v1M672 167v1M673 168v1M674 169v1M675 170v2M676 172v1M677 173v1M678 174v1M679 175v1M680 176v1M681 177v1M682 178v1M683 179v1M684 180v1M685 181v1M686 182v1M687 183v1M688 184v1M689 185v1M690 186v1M779 203v1M817 212v1M818 213v1M821 215v1M822 216v1M823 217v1M824 218v1M825 219v1M826 220v1M827 221v1M828 222v1M829 223v1M830 224v1M831 225v1M832 226v2M833 228v1M834 229v1M844 230v1M849 227v1M850 226v1M851 225v1M852 224v1M853 223v1M854 222v1M855 221v1M856 220v1M857 219v1M858 218v1M859 217v1M860 216v1M861 215v1M862 214v1M863 213v1M864 212v1M865 211v1M866 210v1M867 209v1M868 208v1M869 207v1M870 206v1M871 204v2M872 203v1M873 202v1M874 200v2M875 199v1M876 198v1M877 196v2M878 195v1M879 194v1M880 192v2M881 191v1M882 190v1M883 188v2M884 186v2M885 184v2M886 182v2M887 180v2M888 178v2M889 176v2M890 174v2M891 172v2M892 170v2M893 169v1M894 167v2M895 165v2M896 164v1M897 162v2M898 161v1" stroke="#f020f0" transform="translate(.5 0)"/>
<path d="M92 199h8M100 200h2M102 201h2M104 202h3M107 203h2M109 204h2M111 205h2M113 206h2M115 207h2M118 209h2M121 211h2M123 212h2M135 224h2M140 228h2M144 231h2M148 234h2M151 236h2M154 238h2M157 240h2M160 242h2M165 246h2M172 252h2M210 302h2M216 307h2M218 308h2M221 310h2M223 311h2M225 312h2M227 313h3M230 314h4M234 315h2M237 317h2M242 321h2M248 326h2M256 333h2M267 343h2M281 356h2M296 371h2M298 372h2M301 374h2M303 375h2M305 376h2M307 377h5M312 378h6M318 379h2M320 380h2M323 382h2M326 384h2M330 387h2M333 389h2M349 404h2M353 407h2M355 408h4M359 409h8M367 408h9M376 407h6M382 406h5M387 405h2M389 404h3M392 403h2M394 402h3M397 401h2M399 400h2M430 370h2M486 279h2M490 276h2M493 274h2M496 272h2M498 271h2M501 269h2M503 268h2M505 267h2M507 266h3M510 265h3M513 264h3M516 263h2M518 262h2M520 261h5M525 260h6M532 258h2M537 254h2M565 225h2M571 220h2M574 218h2M577 216h2M580 214h2M583 212h2M586 210h2M588 209h2M590 208h2M592 207h2M594 206h2M596 205h2M602 200h2M647 152h3M650 151h5M655 150h7M662 151h8M670 152h5M675 153h3M678 154h2M682 157h2M685 159h2M688 161h2M690 162h2M693 164h2M695 165h2M697 166h2M699 167h2M701 168h3M704 169h2M706 170h5M711 171h6M717 172h5M722 173h2M724 174h2M726 175h3M729 176h2M731 177h3M734 178h2M736 179h2M738 180h2M740 181h2M742 182h2M744 183h2M746 184h2M748 185h2M750 186h2M752 187h2M755 189h2M757 190h2M759 191h2M761 192h2M763 193h3M766 194h4M770 195h4M774 196h6M780 197h6M786 198h19M805 199h6M811 200h4M815 201h2M819 204h2M822 206h2M826 209h2M831 213h2M834 215h3M837 216h5M842 217h5M847 216h5M852 215h3M855 214h2M857 213h2M859 212h2M861 211h2M863 210h2M865 209h2M867 208h2M869 207h2M871 206h2M873 205h3M876 204h2M878 203h3M881 202h2M883 201h3M886 200h2M888 199h2M890 198h3M893 197h4M897 196h2" stroke="#20f020" transform="translate(0 .5)"/><path d="M117 208v1M120 210v1M125 213v1M126 214v1M127 215v1M128 216v1M129 217v2M130 219v1M131 220v1M132 221v1M133 222v1M134 223v1M137 225v1M138 226v1M139 227v1M142 229v1M143 230v1M146 232v1M147 233v1M150 235v1M153 237v1M156 239v1M159 241v1M162 243v1M163 244v1M164 245v1M167 247v1M168 248v1M169 249v1M170 250v1M171 251v1M174 253v1M175 254v1M176 255v1M177 256v2M178 258v2M179 260v1M180 261v2M181 263v2M182 265v1M183 266v2M184 268v2M185 270v1M186 271v2M187 273v1M188 274v2M189 276v1M190 277v2M191 279v1M192 280v2M193 282v1M194 283v2M195 285v1M196 286v1M197 287v1M198 288v2M199 290v1M200 291v1M201 292v1M202 293v1M203 294v2M204 296v1M205 297v1M206 298v1M207 299v1M208 300v1M209 301v1M212 303v1M213 304v1M214 305v1M215 306v1M220 309v1M236 316v1M239 318v1M240 319v1M241 320v1M244 322v1M245 323v1M246 324v1M247 325v1M250 327v1M251 328v1M252 329v1M253 330v1M254 331v1M255 332v1M258 334v1M259 335v1M260 336v1M261 337v1M262 338v1M263 339v1M264 340v1M265 341v1M266 342v1M269 344v1M270 345v1M271 346v1M272 347v1M273 348v1M274 349v1M275 350v1M276 351v1M277 352v1M278 353v1M279 354v1M280 355v1M283 357v1M284 358v1M285 359v1M286 360v1M287 361v1M288 362v1M289 363v1M290 364v1M291 365v1M292 366v2M293 368v1M294 369v1M295 370v1M300 373v1M322 381v1M325 383v1M328 385v1M329 386v1M332 388v1M335 390v1M336 391v1M337 392v1M338 393v1M339 394v1M340 395v1M341 396v1M342 397v1M343 398v1M344 399v1M345 400v1M346 401v1M347 402v1M348 403v1M351 405v1M352 406v1M401 399v1M402 398v1M403 397v1M404 396v1M405 395v1M406 394v1M407 393v1M408 392v1M409 391v1M410 390v1M411 389v1M412 388v1M413 387v1M414 386v1M415 385v1M416 384v1M417 383v1M418 382v1M419 381v1M420 380v1M421 379v1M422 378v1M423 377v1M424 376v1M425 375v1M426 374v1M427 373v1M428 372v1M429 371v1M432 369v1M433 368v1M434 367v1M435 366v1M436 364v2M437 363v1M438 362v1M439 360v2M440 359v1M441 357v2M442 356v1M443 355v1M444 353v2M445 352v1M446 350v2M447 348v2M448 347v1M449 345v2M450 343v2M451 341v2M452 340v1M453 338v2M454 336v2M455 334v2M456 332v2M457 329v3M458 327v2M459 324v3M460 322v2M461 319v3M462 317v2M463 314v3M464 312v2M465 310v2M466 308v2M467 306v2M468 304v2M469 302v2M470 300v2M471 298v2M472 296v2M473 294v2M474 292v2M475 291v1M476 290v1M477 289v1M478 288v1M479 287v1M480 285v2M481 284v1M482 283v1M483 282v1M484 281v1M485 280v1M488 278v1M489 277v1M492 275v1M495 273v1M500 270v1M531 259v1M534 257v1M535 256v1M536 255v1M539 253v1M540 252v1M541 251v1M542 250v1M543 248v2M544 247v1M545 246v1M546 245v1M547 244v1M548 242v2M549 241v1M550 240v1M551 239v1M552 238v1M553 237v1M554 236v1M555 235v1M556 234v1M557 233v1M558 232v1M559 231v1M560 230v1M561 229v1M562 228v1M563 227v1M564 226v1M567 224v1M568 223v1M569 222v1M570 221v1M573 219v1M576 217v1M579 215v1M582 213v1M585 211v1M598 204v1M599 203v1M600 202v1M601 201v1M604 199v1M605 198v1M606 197v1M607 196v1M608 195v1M609 194v1M610 193v1M611 192v1M612 191v1M613 190v1M614 188v2M615 187v1M616 186v1M617 185v1M618 184v1M619 183v1M620 182v1M621 181v1M622 180v1M623 178v2M624 177v1M625 176v1M626 175v1M627 174v1M628 172v2M629 171v1M630 170v1M631 169v1M632 168v1M633 167v1M634 166v1M635 165v1M636 164v1M637 163v1M638 162v1M639 161v1M640 160v1M641 159v1M642 158v1M643 157v1M644 155v2M645 154v1M646 153v1M680 155v1M681 156v1M684 158v1M687 160v1M692 163v1M754 188v1M817 202v1M818 203v1M821 205v1M824 207v1M825 208v1M828 210v1M829 211v1M830 212v1M833 214v1" stroke="#20f020" transform="translate(.5 0)"/>
<path d="M92 238h7M99 237h10M109 236h6M115 235h6M121 234h6M127 233h8M135 232h8M143 231h8M151 230h24M175 231h3M178 232h3M181 233h2M184 235h2M188 238h2M192 241h2M212 262h2M216 265h2M220 268h2M224 271h2M228 274h2M232 277h2M236 280h2M240 283h2M244 286h2M248 289h2M270 310h2M276 315h2M282 320h2M301 338h2M304 340h2M307 342h2M310 344h2M315 348h2M321 353h2M327 358h2M332 362h2M337 366h2M342 370h2M347 374h2M351 377h2M355 380h2M357 381h2M359 382h3M362 383h4M366 384h3M369 385h4M373 386h5M378 387h5M383 386h6M389 385h5M394 384h3M397 383h3M400 382h3M403 381h3M406 380h5M411 379h8M419 378h7M426 377h6M432 376h5M437 375h2M439 374h3M442 373h2M444 372h3M447 371h2M449 370h2M452 368h2M457 364h2M462 360h2M483 340h2M491 333h2M497 328h2M501 325h2M505 322h2M508 320h2M511 318h2M515 315h2M518 313h2M523 309h2M529 304h2M588 236h2M613 211h2M622 203h2M626 200h2M630 197h2M632 196h2M634 195h2M636 194h3M639 193h3M642 192h2M644 191h4M648 190h5M653 189h5M658 188h21M679 187h8M687 186h5M692 185h3M695 184h3M698 183h3M701 182h2M703 181h2M706 179h2M710 176h2M713 174h2M716 172h2M718 171h2M721 169h2M723 168h2M725 167h3M728 166h5M733 165h7M740 166h7M747 167h3M750 168h2M752 169h3M755 170h3M758 171h2M760 172h3M763 173h3M766 174h2M768 175h3M771 176h4M775 177h4M779 178h4M783 179h3M786 180h4M790 181h3M793 182h3M796 183h2M798 184h2M800 185h3M803 186h2M805 187h2M807 188h2M809 189h2M812 191h2M815 193h2M817 194h2M820 196h2M822 197h2M825 199h2M827 200h2M829 201h2M831 202h3M834 203h4M838 204h16M854 203h10M864 202h10M874 201h7M881 200h3M884 199h4M888 198h4M892 197h4M896 196h3" stroke="#8c8c8c" transform="translate(0 .5)"/><path d="M183 234v1M186 236v1M187 237v1M190 239v1M191 240v1M194 242v1M195 243v1M196 244v1M197 245v1M198 246v1M199 247v2M200 249v1M201 250v1M202 251v1M203 252v1M204 253v1M205 254v1M206 255v2M207 257v1M208 258v1M209 259v1M210 260v1M211 261v1M214 263v1M215 264v1M218 266v1M219 267v1M222 269v1M223 270v1M226 272v1M227 273v1M230 275v1M231 276v1M234 278v1M235 279v1M238 281v1M239 282v1M242 284v1M243 285v1M246 287v1M247 288v1M250 290v1M251 291v1M252 292v1M253 293v1M254 294v1M255 295v1M256 296v1M257 297v1M258 298v1M259 299v1M260 300v1M261 301v1M262 302v1M263 303v1M264 304v1M265 305v1M266 306v1M267 307v1M268 308v1M269 309v1M272 311v1M273 312v1M274 313v1M275 314v1M278 316v1M279 317v1M280 318v1M281 319v1M284 321v1M285 322v1M286 323v1M287 324v1M288 325v1M289 326v1M290 327v1M291 328v1M292 329v1M293 330v1M294 331v1M295 332v1M296 333v1M297 334v1M298 335v1M299 336v1M300 337v1M303 339v1M306 341v1M309 343v1M312 345v1M313 346v1M314 347v1M317 349v1M318 350v1M319 351v1M320 352v1M323 354v1M324 355v1M325 356v1M326 357v1M329 359v1M330 360v1M331 361v1M334 363v1M335 364v1M336 365v1M339 367v1M340 368v1M341 369v1M344 371v1M345 372v1M346 373v1M349 375v1M350 376v1M353 378v1M354 379v1M451 369v1M454 367v1M455 366v1M456 365v1M459 363v1M460 362v1M461 361v1M464 359v1M465 358v1M466 357v1M467 356v1M468 355v1M469 354v1M470 353v1M471 352v1M472 351v1M473 350v1M474 349v1M475 348v1M476 347v1M477 346v1M478 345v1M479 344v1M480 343v1M481 342v1M482 341v1M485 339v1M486 338v1M487 337v1M488 336v1M489 335v1M490 334v1M493 332v1M494 331v1M495 330v1M496 329v1M499 327v1M500 326v1M503 324v1M504 323v1M507 321v1M510 319v1M513 317v1M514 316v1M517 314v1M520 312v1M521 311v1M522 310v1M525 308v1M526 307v1M527 306v1M528 305v1M531 303v1M532 302v1M533 301v1M534 300v1M535 298v2M536 297v1M537 296v1M538 295v1M539 294v1M540 293v1M541 292v1M542 290v2M543 289v1M544 288v1M545 287v1M546 285v2M547 284v1M548 283v1M549 281v2M550 280v1M551 278v2M552 277v1M553 275v2M554 274v1M555 273v1M556 271v2M557 270v1M558 269v1M559 268v1M560 266v2M561 265v1M562 264v1M563 263v1M564 262v1M565 261v1M566 260v1M567 258v2M568 257v1M569 256v1M570 255v1M571 254v1M572 253v1M573 252v1M574 251v1M575 250v1M576 248v2M577 247v1M578 246v1M579 245v1M580 244v1M581 243v1M582 242v1M583 241v1M584 240v1M585 239v1M586 238v1M587 237v1M590 235v1M591 234v1M592 233v1M593 232v1M594 231v1M595 230v1M596 229v1M597 228v1M598 227v1M599 226v1M600 225v1M601 223v2M602 222v1M603 221v1M604 220v1M605 219v1M606 218v1M607 217v1M608 216v1M609 215v1M610 214v1M611 213v1M612 212v1M615 210v1M616 209v1M617 208v1M618 207v1M619 206v1M620 205v1M621 204v1M624 202v1M625 201v1M628 199v1M629 198v1M705 180v1M708 178v1M709 177v1M712 175v1M715 173v1M720 170v1M811 190v1M814 192v1M819 195v1M824 198v1" stroke="#8c8c8c" transform="translate(.5 0)"/>
<path d="M92 279h7M99 278h12M111 277h10M121 276h6M127 275h6M133 274h6M139 273h10M149 272h12M161 271h15M176 270h14M190 271h10M200 272h18M218 273h16M234 274h6M240 275h6M246 276h6M252 277h6M258 278h5M263 279h5M268 280h5M273 281h5M278 282h5M283 283h4M287 284h4M291 285h4M295 286h4M299 287h4M303 288h4M307 289h3M310 290h4M314 291h3M317 292h3M320 293h4M324 294h3M327 295h3M330 296h3M333 297h3M336 298h3M339 299h3M342 300h3M345 301h3M348 302h3M351 303h4M355 304h4M359 305h4M363 306h4M367 307h3M370 308h4M374 309h3M377 310h3M380 311h4M384 312h3M387 313h2M389 314h3M392 315h2M394 316h3M397 317h2M399 318h3M402 319h2M404 320h3M407 321h4M411 322h4M415 323h4M419 324h4M423 325h6M429 326h6M435 327h7M442 328h10M452 329h12M464 330h21M485 331h28M513 332h20M533 331h5M538 330h4M542 329h4M546 328h3M549 327h3M552 326h4M556 325h3M559 324h2M561 323h3M564 322h2M566 321h3M569 320h2M571 319h3M574 318h2M576 317h2M578 316h2M580 315h2M582 314h2M584 313h2M587 311h2M589 310h2M591 309h2M593 308h2M596 306h2M599 304h2M602 302h2M604 301h2M607 299h2M610 297h2M613 295h2M615 294h2M617 293h2M619 292h2M621 291h2M623 290h2M625 289h2M627 288h2M629 287h3M632 286h2M634 285h2M636 284h2M638 283h2M640 282h3M643 281h2M645 280h2M647 279h2M649 278h2M651 277h2M653 276h2M655 275h2M657 274h2M659 273h2M661 272h2M663 271h2M665 270h2M667 269h2M669 268h3M672 267h2M674 266h3M677 265h2M679 264h3M682 263h2M684 262h3M687 261h2M689 260h2M691 259h2M693 258h2M696 256h2M698 255h2M701 253h2M703 252h2M706 250h2M708 249h2M711 247h2M713 246h2M716 244h2M718 243h2M721 241h2M723 240h2M726 238h2M728 237h2M731 235h2M734 233h2M737 231h2M739 230h2M742 228h2M745 226h2M748 224h2M750 223h2M752 222h2M754 221h2M757 219h2M759 218h2M761 217h2M763 216h2M765 215h2M767 214h2M769 213h2M771 212h4M775 211h4M779 210h4M783 209h3M786 208h4M790 207h3M793 206h3M796 205h4M800 204h4M804 203h6M810 202h6M816 201h9M825 200h10M835 199h6M841 198h6M847 197h6M853 196h10M863 195h9M872 194h6M878 193h6M884 192h5M889 191h4M893 190h4M897 189h2" stroke="#f53228" transform="translate(0 .5)"/><path d="M586 312v1M595 307v1M598 305v1M601 303v1M606 300v1M609 298v1M612 296v1M695 257v1M700 254v1M705 251v1M710 248v1M715 245v1M720 242v1M725 239v1M730 236v1M733 234v1M736 232v1M741 229v1M744 227v1M747 225v1M756 220v1" stroke="#f53228" transform="translate(.5 0)"/>
<path d="M90 216.5h7M92.5 214v4" stroke="#fff"/>
<path d="M298 470.5h7M300.5 468v4" stroke="#fff"/>
<path d="M604 70.5h7M606.5 68v4" stroke="#fff"/>
<path d="M826 301.5h7M828.5 299v4" stroke="#fff"/>
<path d="M856 130.5h7M858.5 128v4" stroke="#fff"/>
<path d="M109 684h2M126 645h2M129 643h2M140 629h2M144 626h2M148 636h2M151 634h2M155 631h8M163 632h2M165 633h2M167 634h2M169 635h2M195 694h3M198 695h3M266 649h2M268 650h2M270 651h2M272 650h2M274 649h2M277 647h2M289 663h2M342 638h2M344 639h2M346 640h6M372 547h2M380 558h2M393 556h2M398 561h2M400 560h4M404 561h3M425 570h2M429 571h2M431 570h2M455 528h2M457 527h2M459 526h4M463 525h3M511 652h2M522 638h2M550 533h3M553 534h2M556 536h2M558 537h2M561 537h2M574 534h3M599 587h2M606 573h3M609 574h3M612 573h2M643 639h2M646 637h2M649 637h2M651 638h2M654 636h2M657 634h2M659 633h2M667 632h2M669 633h3M688 649h2M716 597h2M718 596h6M724 597h2M726 598h2M728 599h2M730 600h2M757 648h2M759 649h3M779 610h4M788 616h2M790 617h2M792 618h3M795 619h2M801 616h2M803 615h3M806 614h2M808 615h2M810 616h2M827 676h2M861 546h2M863 547h2M887 588h2M889 587h2M893 583h2M895 582h2" stroke="#ffffff" transform="translate(0 .5)"/><path d="M92 654v1M93 655v2M94 657v2M95 659v2M96 661v2M97 663v2M98 665v2M99 667v2M100 669v2M101 671v3M102 674v2M103 676v2M104 678v1M105 679v1M106 680v1M107 681v2M108 683v1M110 685v1M111 681v3M112 677v4M113 674v3M114 670v4M115 667v3M116 663v4M117 659v4M118 657v2M119 655v2M120 654v1M121 652v2M122 650v2M123 649v1M124 647v2M125 646v1M128 644v1M131 642v1M132 640v2M133 638v2M134 636v2M135 634v2M136 633v1M137 632v1M138 631v1M139 630v1M142 628v1M143 627v1M145 625v1M146 627v4M147 631v4M148 635v1M148 637v1M150 635v1M153 633v1M154 632v1M171 636v1M172 637v1M173 638v1M174 639v1M175 640v1M176 641v2M177 643v4M178 647v4M179 651v4M180 655v4M181 659v4M182 663v3M183 666v4M184 670v4M185 674v3M186 677v2M187 679v2M188 681v3M189 684v2M190 686v2M191 688v2M192 690v1M193 691v1M194 692v2M201 693v2M202 692v1M203 690v2M204 688v2M205 686v2M206 682v4M207 679v3M208 676v3M209 672v4M210 668v4M211 664v4M212 659v5M213 654v5M214 650v4M215 646v4M216 642v4M217 638v4M218 634v4M219 630v4M220 626v4M221 623v3M222 621v2M223 618v3M224 615v3M225 612v3M226 610v2M227 608v2M228 606v2M229 604v2M230 601v3M231 599v2M232 597v2M233 596v1M234 595v1M235 594v1M236 595v1M237 596v1M238 597v2M239 599v1M240 600v2M241 602v2M242 604v2M243 606v3M244 609v2M245 611v2M246 613v2M247 615v2M248 617v2M249 619v2M250 621v2M251 623v1M252 624v1M253 625v1M254 626v1M255 627v2M256 629v2M257 631v3M258 634v3M259 637v2M260 639v2M261 641v2M262 643v1M263 644v2M264 646v2M265 648v1M276 648v1M278 646v1M279 648v2M280 650v3M281 653v2M282 655v2M283 657v1M284 658v1M285 659v1M286 660v1M287 661v1M288 662v1M291 664v1M292 665v2M293 667v2M294 669v3M295 672v2M296 674v2M297 676v2M298 678v1M299 676v2M300 674v2M301 671v3M302 667v4M303 663v4M304 658v5M305 653v5M306 648v5M307 643v5M308 638v5M309 634v4M310 629v5M311 626v3M312 625v1M313 623v2M314 622v1M315 623v2M316 625v2M317 627v1M318 628v1M319 629v1M320 630v1M321 631v1M322 632v1M323 633v2M324 635v2M325 637v2M326 639v2M327 641v2M328 643v2M329 645v1M330 646v2M331 648v2M332 650v1M333 649v1M334 647v2M335 646v1M336 645v1M337 643v2M338 642v1M339 640v2M340 638v2M341 637v1M352 638v2M353 636v2M354 634v2M355 630v4M356 624v6M357 618v6M358 613v5M359 607v6M360 601v6M361 595v6M362 590v5M363 584v6M364 579v5M365 573v6M366 568v5M367 562v6M368 556v6M369 552v4M370 550v2M371 548v2M372 546v1M374 548v2M375 550v1M376 551v2M377 553v2M378 555v2M379 557v1M382 559v1M383 560v1M384 561v1M385 562v1M386 563v1M387 564v1M388 565v1M389 563v2M390 561v2M391 559v2M392 557v2M393 555v1M395 557v1M396 558v2M397 560v1M407 560v1M408 559v1M409 558v1M410 557v1M411 558v2M412 560v2M413 562v2M414 564v1M415 565v2M416 567v1M417 568v1M418 566v2M419 564v2M420 563v1M421 564v2M422 566v2M423 568v1M424 569v1M427 571v1M428 572v1M433 568v2M434 566v2M435 564v2M436 563v1M437 562v1M438 560v2M439 559v1M440 557v2M441 555v2M442 553v2M443 551v2M444 550v1M445 548v2M446 547v1M447 545v2M448 542v3M449 538v4M450 535v3M451 533v2M452 532v1M453 530v2M454 529v1M466 526v1M467 527v1M468 528v1M469 529v2M470 531v2M471 533v2M472 535v2M473 537v1M474 538v1M475 539v1M476 540v2M477 542v4M478 546v4M479 550v4M480 554v5M481 559v7M482 566v8M483 574v6M484 580v4M485 584v5M486 589v4M487 593v4M488 597v3M489 600v3M490 603v3M491 606v3M492 609v4M493 613v4M494 617v4M495 621v3M496 624v3M497 627v4M498 631v2M499 633v2M500 635v2M501 637v2M502 639v2M503 641v1M504 642v2M505 644v1M506 645v1M507 646v2M508 648v1M509 649v2M510 651v1M513 653v1M514 651v2M515 649v2M516 648v1M517 646v2M518 644v2M519 642v2M520 641v1M521 639v2M522 637v1M523 639v1M524 640v2M525 642v1M526 641v1M527 639v2M528 637v2M529 633v4M530 629v4M531 623v6M532 615v8M533 608v7M534 602v6M535 596v6M536 590v6M537 585v5M538 580v5M539 575v5M540 570v5M541 565v5M542 560v5M543 555v5M544 550v5M545 546v4M546 542v4M547 538v4M548 536v2M549 534v2M550 532v1M555 535v1M560 538v1M563 535v2M564 533v2M565 531v2M566 529v2M567 528v1M568 529v1M569 530v1M570 531v1M571 532v1M572 533v2M573 535v1M576 533v1M577 535v2M578 537v3M579 540v2M580 542v2M581 544v2M582 546v3M583 549v2M584 551v3M585 554v2M586 556v3M587 559v2M588 561v3M589 564v2M590 566v3M591 569v3M592 572v3M593 575v2M594 577v2M595 579v2M596 581v2M597 583v1M598 584v2M599 586v1M600 588v1M601 585v2M602 582v3M603 579v3M604 577v2M605 574v3M606 572v1M614 574v1M615 575v2M616 577v1M617 578v2M618 580v2M619 582v2M620 584v2M621 586v5M622 591v6M623 597v5M624 602v3M625 605v4M626 609v3M627 612v2M628 614v3M629 617v2M630 619v3M631 622v2M632 624v2M633 626v3M634 629v2M635 631v3M636 634v2M637 636v2M638 638v1M639 639v1M640 640v1M641 641v1M642 640v1M645 638v1M648 636v1M653 637v1M656 635v1M661 634v1M662 635v2M663 637v1M664 636v1M665 634v2M666 633v1M672 634v1M673 635v2M674 637v1M675 638v1M676 639v2M677 641v2M678 643v1M679 644v1M680 645v1M681 646v1M682 647v1M683 648v1M684 649v1M685 650v1M686 651v1M687 650v1M690 648v1M691 647v1M692 646v1M693 645v1M694 644v1M695 643v1M696 642v1M697 641v1M698 639v2M699 638v1M700 636v2M701 634v2M702 632v2M703 629v3M704 627v2M705 624v3M706 620v4M707 616v4M708 612v4M709 610v2M710 607v3M711 605v2M712 603v2M713 601v2M714 600v1M715 598v2M732 601v2M733 603v2M734 605v2M735 607v1M736 608v2M737 610v2M738 612v1M739 613v2M740 615v2M741 617v2M742 619v3M743 622v3M744 625v2M745 627v3M746 630v2M747 632v1M748 633v2M749 635v1M750 636v2M751 638v1M752 639v2M753 641v2M754 643v1M755 644v2M756 646v2M762 648v1M763 647v1M764 645v2M765 642v3M766 639v3M767 636v3M768 633v3M769 630v3M770 627v3M771 624v3M772 622v2M773 619v3M774 617v2M775 615v2M776 614v1M777 612v2M778 611v1M783 611v1M784 612v1M785 613v1M786 614v1M787 615v1M797 620v1M798 619v1M799 618v1M800 617v1M811 617v1M812 618v3M813 621v3M814 624v3M815 627v4M816 631v4M817 635v5M818 640v5M819 645v6M820 651v5M821 656v4M822 660v5M823 665v4M824 669v2M825 671v3M826 674v2M828 675v1M829 673v2M830 669v4M831 665v4M832 661v4M833 657v4M834 653v4M835 647v6M836 639v8M837 633v6M838 628v5M839 623v5M840 617v6M841 610v7M842 604v6M843 600v4M844 595v5M845 590v5M846 584v6M847 579v5M848 576v3M849 572v4M850 568v4M851 564v4M852 561v3M853 559v2M854 557v2M855 554v3M856 550v4M857 548v2M858 547v1M859 546v1M860 545v1M865 548v1M866 549v1M867 550v1M868 551v2M869 553v2M870 555v2M871 557v2M872 559v3M873 562v4M874 566v3M875 569v3M876 572v3M877 575v3M878 578v3M879 581v3M880 584v2M881 586v2M882 588v2M883 590v2M884 592v1M885 591v1M886 589v2M891 586v1M892 584v2M897 580v2" stroke="#ffffff" transform="translate(.5 0)"/>
<path d="M116 671h2M141 639h2M145 636h2M148 634h2M150 633h5M155 632h10M165 633h6M171 634h2M175 637h2M200 685h2M202 686h2M204 687h2M270 641h2M272 642h2M274 643h2M276 644h2M279 646h2M283 649h2M300 666h3M303 665h3M320 636h3M323 635h3M326 636h2M328 637h2M331 639h2M334 641h2M336 642h2M338 641h3M341 640h10M353 637h2M380 563h3M383 562h6M389 561h4M393 560h16M409 561h5M414 562h4M418 563h3M421 564h2M423 565h2M425 566h2M428 568h2M430 569h2M434 568h2M465 530h2M470 530h2M474 533h2M515 641h3M518 642h4M522 641h2M524 640h3M527 641h2M565 538h2M567 537h2M569 536h4M573 535h4M577 536h2M579 537h2M601 574h3M604 575h6M610 574h4M614 575h2M616 576h2M645 630h2M648 632h4M652 633h14M666 634h6M672 635h3M675 636h2M679 639h2M683 642h2M686 644h2M688 645h8M696 644h2M698 643h2M722 604h2M725 602h3M728 601h4M732 602h2M734 603h2M761 639h2M764 641h2M766 640h2M768 639h2M784 618h2M786 617h2M788 616h3M791 617h2M793 618h3M796 619h2M798 618h2M800 617h2M802 616h3M805 615h4M809 616h3M830 659h2M832 660h2M867 558h2M869 557h3M872 558h2M888 582h2M890 583h3M893 582h3M896 581h2" stroke="#f0f000" transform="translate(0 .5)"/><path d="M92 638v1M93 639v2M94 641v2M95 643v2M96 645v1M97 646v2M98 648v2M99 650v2M100 652v2M101 654v2M102 656v2M103 658v2M104 660v2M105 662v2M106 664v2M107 666v2M108 668v1M109 669v1M110 670v2M111 672v1M112 673v1M113 674v1M114 673v1M115 672v1M118 670v1M119 669v1M120 668v1M121 666v2M122 665v1M123 663v2M124 661v2M125 660v1M126 658v2M127 657v1M128 655v2M129 653v2M130 652v1M131 651v1M132 650v1M133 648v2M134 647v1M135 646v1M136 645v1M137 644v1M138 642v2M139 641v1M140 640v1M143 638v1M144 637v1M147 635v1M173 635v1M174 636v1M177 638v2M178 640v2M179 642v2M180 644v2M181 646v2M182 648v2M183 650v2M184 652v2M185 654v3M186 657v2M187 659v3M188 662v2M189 664v2M190 666v3M191 669v2M192 671v2M193 673v2M194 675v2M195 677v1M196 678v2M197 680v1M198 681v2M199 683v2M206 686v1M207 685v1M208 683v2M209 682v1M210 681v1M211 679v2M212 676v3M213 673v3M214 670v3M215 667v3M216 664v3M217 661v3M218 657v4M219 654v3M220 651v3M221 647v4M222 644v3M223 641v3M224 637v4M225 634v3M226 631v3M227 627v4M228 625v2M229 623v2M230 621v2M231 619v2M232 617v2M233 615v2M234 613v2M235 612v1M236 611v1M237 610v1M238 609v1M239 608v1M240 607v1M241 606v1M242 607v1M243 608v1M244 609v1M245 610v1M246 611v1M247 612v1M248 613v1M249 614v2M250 616v1M251 617v1M252 618v1M253 619v2M254 621v1M255 622v1M256 623v2M257 625v1M258 626v1M259 627v2M260 629v1M261 630v2M262 632v1M263 633v1M264 634v1M265 635v1M266 636v2M267 638v1M268 639v1M269 640v1M278 645v1M281 647v1M282 648v1M285 650v1M286 651v1M287 652v1M288 653v1M289 654v2M290 656v1M291 657v1M292 658v1M293 659v1M294 660v1M295 661v1M296 662v1M297 663v1M298 664v1M299 665v1M305 664v1M306 662v2M307 659v3M308 656v3M309 654v2M310 651v3M311 649v2M312 647v2M313 645v2M314 643v2M315 641v2M316 640v1M317 639v1M318 638v1M319 637v1M330 638v1M333 640v1M351 639v1M352 638v1M355 636v1M356 634v2M357 631v3M358 629v2M359 626v3M360 623v3M361 620v3M362 616v4M363 612v4M364 608v4M365 603v5M366 597v6M367 591v6M368 586v5M369 583v3M370 580v3M371 577v3M372 574v3M373 572v2M374 570v2M375 568v2M376 567v1M377 566v1M378 565v1M379 564v1M427 567v1M432 570v1M433 569v1M436 567v1M437 566v1M438 565v1M439 563v2M440 562v1M441 561v1M442 559v2M443 558v1M444 557v1M445 556v1M446 555v1M447 553v2M448 552v1M449 551v1M450 550v1M451 548v2M452 547v1M453 545v2M454 544v1M455 542v2M456 541v1M457 540v1M458 538v2M459 537v1M460 536v1M461 534v2M462 533v1M463 532v1M464 531v1M467 529v1M468 528v1M469 529v1M472 531v1M473 532v1M476 534v1M477 535v2M478 537v2M479 539v3M480 542v2M481 544v3M482 547v4M483 551v4M484 555v4M485 559v3M486 562v4M487 566v3M488 569v3M489 572v4M490 576v3M491 579v4M492 583v3M493 586v4M494 590v4M495 594v3M496 597v4M497 601v3M498 604v3M499 607v4M500 611v3M501 614v2M502 616v3M503 619v3M504 622v2M505 624v2M506 626v2M507 628v2M508 630v2M509 632v2M510 634v2M511 636v1M512 637v1M513 638v2M514 640v1M529 639v2M530 638v1M531 636v2M532 634v2M533 631v3M534 627v4M535 624v3M536 621v3M537 617v4M538 613v4M539 609v4M540 604v5M541 598v6M542 591v7M543 586v5M544 582v4M545 578v4M546 574v4M547 570v4M548 566v4M549 562v4M550 560v2M551 558v2M552 556v2M553 554v2M554 552v2M555 550v2M556 548v2M557 547v1M558 546v1M559 544v2M560 543v1M561 542v1M562 541v1M563 540v1M564 539v1M581 538v1M582 539v2M583 541v2M584 543v2M585 545v2M586 547v1M587 548v2M588 550v2M589 552v2M590 554v2M591 556v2M592 558v2M593 560v2M594 562v2M595 564v2M596 566v2M597 568v2M598 570v1M599 571v1M600 572v2M618 577v1M619 578v1M620 579v1M621 580v2M622 582v1M623 583v2M624 585v2M625 587v2M626 589v3M627 592v2M628 594v3M629 597v2M630 599v2M631 601v3M632 604v2M633 606v3M634 609v2M635 611v3M636 614v3M637 617v2M638 619v2M639 621v2M640 623v1M641 624v2M642 626v2M643 628v1M644 629v1M647 631v1M677 637v1M678 638v1M681 640v1M682 641v1M685 643v1M700 642v1M701 640v2M702 639v1M703 638v1M704 636v2M705 634v2M706 632v2M707 630v2M708 627v3M709 625v2M710 623v2M711 621v2M712 619v2M713 617v2M714 615v2M715 613v2M716 611v2M717 610v1M718 609v1M719 607v2M720 606v1M721 605v1M724 603v1M736 604v1M737 605v1M738 606v1M739 607v1M740 608v1M741 609v2M742 611v1M743 612v1M744 613v2M745 615v1M746 616v2M747 618v2M748 620v2M749 622v1M750 623v2M751 625v2M752 627v2M753 629v2M754 631v1M755 632v1M756 633v1M757 634v2M758 636v1M759 637v1M760 638v1M763 640v1M770 638v1M771 637v1M772 635v2M773 634v1M774 633v1M775 631v2M776 630v1M777 628v2M778 626v2M779 625v1M780 623v2M781 622v1M782 621v1M783 619v2M812 617v2M813 619v1M814 620v2M815 622v2M816 624v2M817 626v3M818 629v2M819 631v3M820 634v4M821 638v4M822 642v3M823 645v2M824 647v3M825 650v2M826 652v2M827 654v2M828 656v1M829 657v2M834 659v1M835 658v1M836 656v2M837 654v2M838 651v3M839 649v2M840 646v3M841 642v4M842 638v4M843 634v4M844 630v4M845 624v6M846 618v6M847 613v5M848 609v4M849 605v4M850 601v4M851 597v4M852 594v3M853 590v4M854 587v3M855 584v3M856 581v3M857 578v3M858 575v3M859 572v3M860 570v2M861 567v3M862 565v2M863 563v2M864 562v1M865 560v2M866 559v1M874 559v2M875 561v2M876 563v1M877 564v2M878 566v2M879 568v2M880 570v2M881 572v2M882 574v1M883 575v2M884 577v1M885 578v1M886 579v2M887 581v1" stroke="#f0f000" transform="translate(.5 0)"/>
<path d="M92 613v36M94 613v36M96 613v35M98 613v35M100 613v36M102 613v38M104 613v37M106 613v34M108 613v30M110 613v27M112 613v15M114 613v1M148 613v3M150 613v3M164 613v3M166 613v3M168 613v4M170 613v5M172 613v7M174 613v9M176 613v17M178 613v26M180 613v33M182 613v40M184 613v41M186 613v42M188 613v39M190 613v37M192 613v35M194 613v33M196 613v30M198 613v26M200 613v20M202 613v12M244 613v7M246 613v14M248 613v17M250 613v16M252 613v16M254 613v18M256 613v21M258 613v24M260 613v27M262 613v30M264 613v28M266 613v25M268 613v21M270 613v17M272 613v13M274 613v9M276 613v5M278 613v5M280 613v8M282 613v13M284 613v17M286 613v18M288 613v18M290 613v16M292 613v15M294 613v20M296 613v25M298 613v26M300 613v15M302 613v6M324 613v1M326 613v6M328 613v9M330 613v14M332 613v19M334 613v13M336 613v8M352 613v3M386 613v6M388 613v8M390 613v2M406 613v1M412 613v6M414 613v9M416 613v11M418 613v9M420 613v7M422 613v7M424 613v10M426 613v10M428 613v9M430 613v7M432 613v3M472 613v8M474 613v14M476 613v19M478 613v30M480 613v44M482 613v51M484 613v56M486 613v58M488 613v59M490 613v58M492 613v57M494 613v56M496 613v55M498 613v52M500 613v47M502 613v43M504 613v39M506 613v38M508 613v35M510 613v31M512 613v26M514 613v21M516 613v13M518 613v5M526 613v1M578 613v5M580 613v12M582 613v17M584 613v21M586 613v25M588 613v31M590 613v33M592 613v33M594 613v32M596 613v32M598 613v31M600 613v30M602 613v23M604 613v9M616 613v3M618 613v9M620 613v13M622 613v20M624 613v30M626 613v39M628 613v40M630 613v40M632 613v39M634 613v40M636 613v42M638 613v40M640 613v37M642 613v30M644 613v20M646 613v15M648 613v13M650 613v9M652 613v8M654 613v9M656 613v4M664 613v4M672 613v2M674 613v7M676 613v11M678 613v13M680 613v14M682 613v14M684 613v14M686 613v14M688 613v10M690 613v4M732 613v3M734 613v6M736 613v9M738 613v12M740 613v15M742 613v19M744 613v23M746 613v25M748 613v26M750 613v26M752 613v27M754 613v26M756 613v25M758 613v22M760 613v19M762 613v13M764 613v6M794 613v4M796 613v5M798 613v3M810 613v2M812 613v9M814 613v17M816 613v25M818 613v35M820 613v43M822 613v49M824 613v51M826 613v50M828 613v42M830 613v26M832 613v11M872 613v6M874 613v17M876 613v25M878 613v31M880 613v34M882 613v31M884 613v27M886 613v20M888 613v12M890 613v7M892 613v2" stroke="#32c878" transform="translate(.5 0)"/>
<path d="M116 603v11M118 593v21M120 589v25M122 587v27M124 586v28M126 589v25M128 592v22M130 589v25M132 586v28M134 590v24M136 593v21M138 594v20M140 594v20M142 593v21M144 591v23M146 605v9M152 607v7M154 606v8M156 607v7M158 608v6M160 609v5M162 612v2M204 612v2M206 605v9M208 599v15M210 592v22M212 582v32M214 572v42M216 564v50M218 563v51M220 561v53M222 559v55M224 560v54M226 562v52M228 564v50M230 566v48M232 570v44M234 575v39M236 583v31M238 591v23M240 601v13M242 609v5M304 602v12M306 588v26M308 576v38M310 569v45M312 566v48M314 571v43M316 579v35M318 589v25M320 597v17M322 605v9M338 613v1M340 606v8M342 603v11M344 607v7M346 609v5M348 611v3M350 613v1M354 602v12M356 592v22M358 581v33M360 568v46M362 554v60M364 544v70M366 538v76M368 539v75M370 547v67M372 559v55M374 572v42M376 586v28M378 597v17M380 603v11M382 607v7M384 613v1M392 603v11M394 600v14M396 608v6M398 611v3M400 611v3M402 610v4M404 609v5M408 611v3M410 611v3M434 609v5M436 604v10M438 600v14M440 597v17M442 594v20M444 591v23M446 589v25M448 587v27M450 583v31M452 581v33M454 584v30M456 587v27M458 590v24M460 594v20M462 597v17M464 599v15M466 601v13M468 606v8M470 613v1M520 608v6M522 602v12M524 609v5M528 610v4M530 597v17M532 574v40M534 564v50M536 556v58M538 553v61M540 534v80M542 529v85M544 542v72M546 545v69M548 545v69M550 557v57M552 570v44M554 579v35M556 588v26M558 592v22M560 598v16M562 597v17M564 594v20M566 593v21M568 600v14M570 607v7M572 611v3M574 612v2M576 607v7M606 608v6M608 609v5M610 610v4M612 609v5M614 611v3M658 612v2M660 610v4M662 612v2M666 612v2M668 609v5M670 609v5M692 611v3M694 610v4M696 609v5M698 606v8M700 601v13M702 594v20M704 587v27M706 583v31M708 581v33M710 579v35M712 575v39M714 574v40M716 577v37M718 583v31M720 591v23M722 596v18M724 600v14M726 603v11M728 606v8M730 607v7M766 611v3M768 605v9M770 598v16M772 591v23M774 587v27M776 585v29M778 585v29M780 589v25M782 595v19M784 601v13M786 605v9M788 607v7M790 609v5M792 613v1M800 608v6M802 605v9M804 604v10M806 606v8M808 609v5M834 608v6M836 594v20M838 579v35M840 567v47M842 560v54M844 552v62M846 539v75M848 535v79M850 538v76M852 543v71M854 550v64M856 554v60M858 561v53M860 570v44M862 579v35M864 588v26M866 595v19M868 603v11M870 609v5M894 612v2M896 609v5M898 607v7" stroke="#ee3152" transform="translate(.5 0)"/></svg>
<div class="side"></div>
<div class="tab" style="top:0px;height:50px;padding-top:6px;box-sizing:border-box"><span>分</span><span>时</span><span>图</span></div>
<div class="tab on" style="top:51px;height:46px;padding-top:4px;box-sizing:border-box"><span>K</span><span>线</span><span>图</span></div>
<div class="tab" style="top:98px;height:50px;padding-top:6px;box-sizing:border-box"><span>闪</span><span>电</span><span>图</span></div>
<div class="tab" style="top:149px;height:65px;padding-top:7px;box-sizing:border-box"><span>合</span><span>约</span><span>资</span><span>料</span></div>
<div class="t" style="left:92px;top:2px;font-family:'Liberation Sans','Noto Sans CJK SC',sans-serif;font-size:12px">现货黄金<span style="color:#ff6a00">【日线】</span></div>
<svg style="position:absolute;left:195px;top:1px" width="13" height="13" viewBox="0 0 13 13"><rect x="0.5" y="0.5" width="12" height="12" fill="#fff" stroke="#3a4a9a"/><polyline points="1,7 4,3 6,6 9,2 12,4" fill="none" stroke="#e02020" stroke-width="1.2"/><polyline points="1,10 4,7 7,9 12,6" fill="none" stroke="#2030c0" stroke-width="1.2"/></svg>
<div class="t" id="h1" style="letter-spacing:0.15px;left:210px;top:3px;color:#e6e6e6">MA(5,10,30,60,100,200)</div>
<div class="t" id="h2" style="letter-spacing:0.22px;left:349px;top:3px;color:#e6e6e6">MA5:1992.03</div>
<div class="t" id="h3" style="letter-spacing:0.22px;left:432px;top:3px;color:#d2d228">MA10:1978.95</div>
<div class="t" id="h4" style="letter-spacing:0.22px;left:522px;top:3px;color:#d21ed2">MA30:1972.67</div>
<div class="t" id="h5" style="letter-spacing:0.22px;left:612px;top:3px;color:#1ed21e">MA60:1932.29</div>
<div class="t" id="h6" style="letter-spacing:0.22px;left:702px;top:3px;color:#8c8c8c">MA100:1933.2</div>
<svg style="position:absolute;left:859px;top:1px" width="14" height="14" viewBox="0 0 14 14"><rect x="0.500" y="0.500" width="13" height="13" fill="#000" stroke="#a8a8a8"/><g fill="#b4b4b4"><rect x="6" y="6" width="2" height="2"/><rect x="6" y="2" width="2" height="3"/><rect x="6" y="9" width="2" height="3"/><rect x="2" y="6" width="3" height="2"/><rect x="9" y="6" width="3" height="2"/></g></svg>
<svg style="position:absolute;left:875px;top:1px" width="14" height="14" viewBox="0 0 14 14"><rect x="0.500" y="0.500" width="13" height="13" fill="#000" stroke="#a8a8a8"/><g stroke="#b4b4b4" fill="none"><path d="M3.500 3v8.5M2 10.500h10"/><path d="M7.500 3v6"/></g><path d="M2.200 4.500l1.300-2.300l1.300 2.300zM10.500 9.200l2 1.300l-2 1.300zM3.500 9.200l-2 1.300l2 1.300z" fill="#b4b4b4"/><path d="M11 3v6L8 6z" fill="#b4b4b4"/></svg>
<svg style="position:absolute;left:891px;top:1px" width="14" height="14" viewBox="0 0 14 14"><rect x="0.500" y="0.500" width="13" height="13" fill="#000" stroke="#a8a8a8"/><g stroke="#b4b4b4" fill="none"><path d="M3.500 3v8.5M2 10.500h10"/></g><path d="M2.200 4.500l1.300-2.300l1.300 2.300zM10.500 9.200l2 1.300l-2 1.300zM3.500 9.200l-2 1.300l2 1.300z" fill="#b4b4b4"/><path d="M6 3l5.500 3.500L6 10z" fill="#b4b4b4"/></svg>
<svg style="position:absolute;left:907px;top:1px" width="14" height="14" viewBox="0 0 14 14"><rect x="0.500" y="0.500" width="13" height="13" fill="#000" stroke="#a8a8a8"/><g stroke="#b4b4b4" fill="none"><rect x="2.500" y="2.500" width="3" height="9"/><path d="M5.500 7h4" stroke-width="1.500"/></g><path d="M8 4.500l4 2.500-4 2.500z" fill="#b4b4b4"/></svg>
<div class="yl" style="top:14px">2135.14</div>
<div class="yr" style="top:14px">2135.14</div>
<div class="yl" style="top:74px">2065.53</div>
<div class="yr" style="top:74px">2065.53</div>
<div class="yl" style="top:134px">1995.92</div>
<div class="yr" style="top:134px">1995.92</div>
<div class="yl" style="top:194px">1926.30</div>
<div class="yr" style="top:194px">1926.30</div>
<div class="yl" style="top:254px">1856.69</div>
<div class="yr" style="top:254px">1856.69</div>
<div class="yl" style="top:314px">1787.08</div>
<div class="yr" style="top:314px">1787.08</div>
<div class="yl" style="top:374px">1717.46</div>
<div class="yr" style="top:374px">1717.46</div>
<div class="yl" style="top:434px">1647.85</div>
<div class="yr" style="top:434px">1647.85</div>
<div class="yl" style="top:516px">37.08</div>
<div class="yr" style="top:516px">37.08</div>
<div class="yl" style="top:540px">26.80</div>
<div class="yr" style="top:540px">26.80</div>
<div class="yl" style="top:565px">16.52</div>
<div class="yr" style="top:565px">16.52</div>
<div class="yl" style="top:590px">6.24</div>
<div class="yr" style="top:590px">6.24</div>
<div class="yl" style="top:614px">-4.04</div>
<div class="yr" style="top:614px">-4.04</div>
<div class="yl" style="top:639px">-14.32</div>
<div class="yr" style="top:639px">-14.32</div>
<div class="yl" style="top:664px">-24.60</div>
<div class="yr" style="top:664px">-24.60</div>
<div style="position:absolute;left:922px;top:136px;width:68px;height:18px;background:#000;border:1px solid #f0a030;border-right:none;box-sizing:border-box"></div>
<div class="t" style="left:926px;top:138px;color:#f0a030">2002.21</div>
<svg style="position:absolute;left:982px;top:128px" width="8" height="9" viewBox="0 0 8 9"><rect width="8" height="9" fill="#000"/><path d="M4 0.5L7.5 4h-7zM4 4.5L8 8.5h-8z" fill="#f0a030"/></svg>
<svg style="position:absolute;left:22px;top:502px" width="14" height="14" viewBox="0 0 14 14" shape-rendering="auto"><g stroke="#f00" stroke-width="1"><path d="M7 0v2M7 12v2M0 7h2M12 7h2M2 2l1.5 1.5M10.500 10.5l1.5 1.5M12 2l-1.5 1.5M2 12l1.5-1.5"/></g><circle cx="7" cy="7" r="3.6" fill="#fff" stroke="#000"/><circle cx="7" cy="7" r="1.8" fill="#f00"/></svg>
<div class="t" id="m1" style="left:92.5px;top:505px;color:#e6e6e6;letter-spacing:0.2px">MACD(26,12,9)</div>
<div class="t" id="m1b" style="left:182.5px;top:505px;color:#e6e6e6;letter-spacing:-0.1px">DIFF:13.90</div>
<div class="t" id="m2" style="left:249.5px;top:505px;letter-spacing:-0.15px;color:#d2d228">DEA:12.75</div>
<div class="t" id="m3" style="left:315.5px;top:505px;letter-spacing:0.1px;color:#d21ed2">MACD:2.29</div>
<div class="xl" style="left:132px">2022/06</div>
<div class="xl" style="left:218px">2022/08</div>
<div class="xl" style="left:308px">2022/10</div>
<div class="xl" style="left:394px">2022/12</div>
<div class="xl" style="left:478px">2023/02</div>
<div class="xl" style="left:564px">2023/04</div>
<div class="xl" style="left:648px">2023/06</div>
<div class="xl" style="left:734px">2023/08</div>
<div class="xl" style="left:822px">2023/10</div>
<div class="t" style="left:34px;top:699px;color:#ff6a00;font-weight:bold;font-size:13px;font-family:'Liberation Sans','Noto Sans CJK SC',sans-serif">日线</div>
<svg style="position:absolute;left:64px;top:702px" width="10" height="9" viewBox="0 0 10 9"><path d="M5 0.500L9.500 8.500H0.500z" fill="#ff6a00"/></svg>
<div class="bar"></div>
<div class="bt" style="left:20px;width:39px;line-height:16px;background:#ff6a00;color:#fff;font-size:12px;font-family:'Liberation Sans','WenQuanYi Zen Hei','Noto Sans CJK SC',sans-serif;">指标</div>
<div class="bt" style="left:60px;width:39px;line-height:16px;color:#fff;font-size:12px;font-family:'Liberation Sans','WenQuanYi Zen Hei','Noto Sans CJK SC',sans-serif;">模板</div>
<div class="bt" style="left:100px;width:57px;line-height:16px;color:#ff6a00;font-size:12px;font-family:'Liberation Mono','WenQuanYi Zen Hei','Noto Sans CJK SC',monospace;"><span style="font-size:10px">VIP</span>指标</div>
<div class="bt" style="left:157px;width:29px;">MA</div>
<div class="bt" style="left:186px;width:40px;">MACD</div>
<div class="bt" style="left:226px;width:41px;">BOLL</div>
<div class="bt" style="left:267px;width:32px;">VOL</div>
<div class="bt" style="left:299px;width:41px;">BIAS</div>
<div class="bt" style="left:340px;width:34px;">CCI</div>
<div class="bt" style="left:374px;width:35px;">KDJ</div>
<div class="bt" style="left:409px;width:38px;">LW&amp;</div>
<div class="bt" style="left:447px;width:36px;">RSI</div>
<div class="bt" style="left:483px;width:28px;">CR</div>
<div class="bt" style="left:511px;width:34px;">PSY</div>
<div class="bt" style="left:545px;width:39px;line-height:16px;color:#c8c8c8;font-size:12px;font-family:'Liberation Sans','WenQuanYi Zen Hei','Noto Sans CJK SC',sans-serif;">设置</div>
</body></html>
